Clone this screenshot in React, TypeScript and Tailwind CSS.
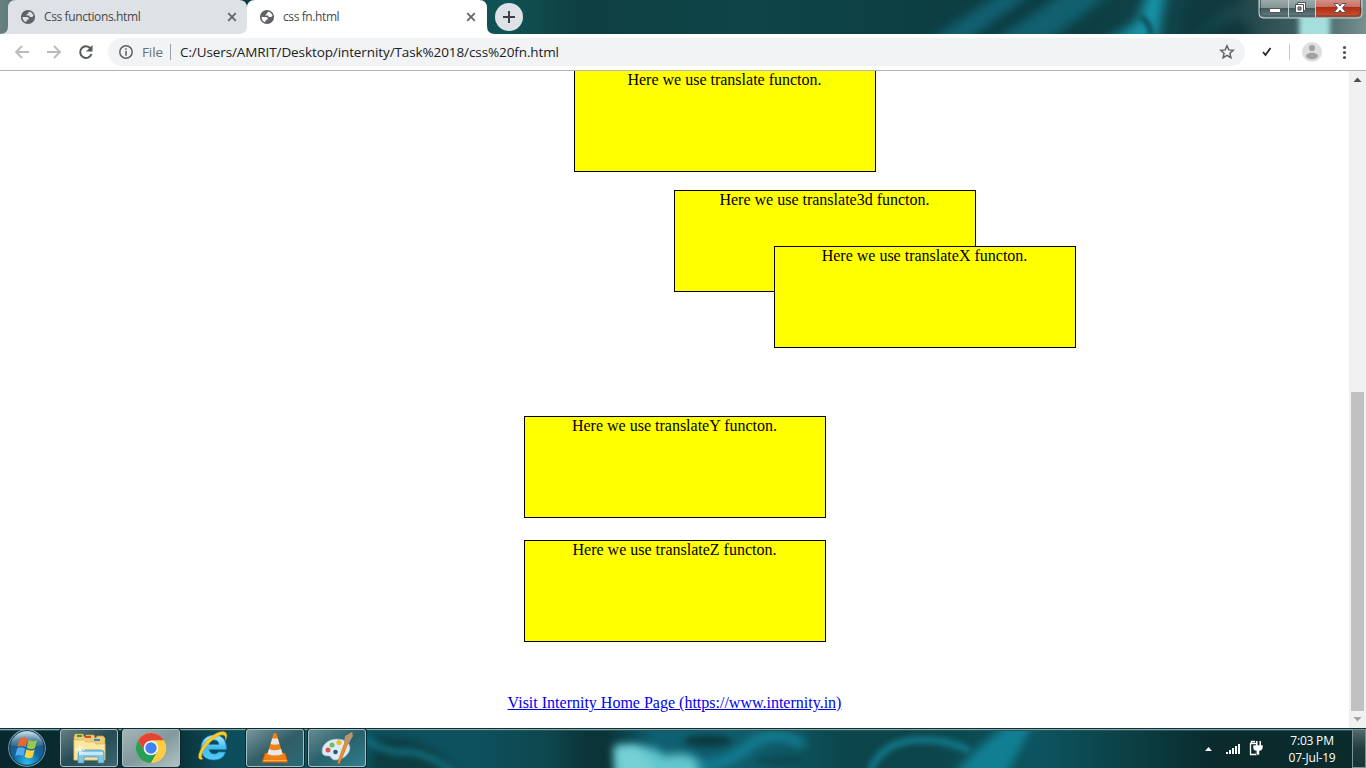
import React from "react";

const UI = "font-['Open_Sans','Noto_Sans',sans-serif]";

function Globe({ land }: { land: string }) {
  return (
    <svg viewBox="0 0 16 16" className="h-4 w-4 shrink-0">
      <circle cx="8" cy="8" r="7.100" fill="#5f6368" />
      <path d="M2.500 8h4.200c1.500 0 2.300.9 2.300 2.200H7.700c0 1.200-.8 1.500-1.500 1.500v1.600C4 12.500 2.500 10.400 2.500 8zM9.600 2.700c2 .6 3.400 2.100 3.900 4-.5.900-1.300 1.300-2.300 1.300-1.400 0-2-.7-2-1.600H6.600c0-1.300.7-1.700 1.500-1.700 0-1.200.5-1.700 1.500-2z" fill={land} />
    </svg>
  );
}

function Cross() {
  return (
    <svg viewBox="0 0 10 10" className="h-[10px] w-[10px] shrink-0">
      <path d="M1.200 1.200l7.600 7.600M8.800 1.200L1.200 8.800" stroke="#5f6368" strokeWidth="1.700" />
    </svg>
  );
}

function TitleBackdrop() {
  return (
    <svg className="absolute inset-0 h-full w-full" viewBox="0 0 1366 34" preserveAspectRatio="none">
      <defs>
        <linearGradient id="title">
          <stop offset="0" stopColor="#688180" />
          <stop offset=".03" stopColor="#385d5e" />
          <stop offset=".15" stopColor="#073b40" />
          <stop offset=".37" stopColor="#105354" />
          <stop offset=".42" stopColor="#0f4043" />
          <stop offset=".55" stopColor="#0d4548" />
          <stop offset=".76" stopColor="#0c3b40" />
          <stop offset=".88" stopColor="#11454b" />
          <stop offset=".92" stopColor="#284b4e" />
          <stop offset=".97" stopColor="#4d6c6d" />
          <stop offset="1" stopColor="#789090" />
        </linearGradient>
        <filter id="soft" filterUnits="userSpaceOnUse" x="-50" y="-60" width="1470" height="160" colorInterpolationFilters="sRGB"><feGaussianBlur stdDeviation="6" /></filter>
        <filter id="soft2" filterUnits="userSpaceOnUse" x="-50" y="-60" width="1470" height="160" colorInterpolationFilters="sRGB"><feGaussianBlur stdDeviation="2.500" /></filter>
      </defs>
      <rect width="1366" height="34" fill="url(#title)" />
      <path d="M925 44L1005-10h32L962 44z" fill="#136174" filter="url(#soft)" />
      <path d="M988 44l80-54h46L1045 44z" fill="#116171" filter="url(#soft)" />
      <path d="M1100 44q34-16 40-28l9-28h17l-9 56z" fill="#1895a8" filter="url(#soft)" />
      <path d="M1140 17q10 4 11 19" stroke="#0a4350" strokeWidth="5" fill="none" filter="url(#soft2)" />
      <path d="M1190-12h60q-10 16-28 22-16 8-36 34-6-16 4-56" fill="#0f393e" filter="url(#soft)" />
      <path d="M1190 40h65l-15-22z" fill="#0f3539" filter="url(#soft)" />
      <rect x="1299" y="13" width="31" height="30" fill="#a4dedd" filter="url(#soft2)" />
    </svg>
  );
}

function WindowButtons() {
  return (
    <svg className="absolute right-[2px] top-0 h-[19px] w-[106px]" viewBox="0 0 106 19">
      <defs>
        <linearGradient id="glassbtn" x2="0" y2="1">
          <stop offset="0" stopColor="#a2b0b0" /><stop offset=".48" stopColor="#849596" />
          <stop offset=".5" stopColor="#40575a" /><stop offset="1" stopColor="#6d8587" />
        </linearGradient>
        <linearGradient id="redbtn" x2="0" y2="1">
          <stop offset="0" stopColor="#d79a8e" /><stop offset=".48" stopColor="#c57060" />
          <stop offset=".5" stopColor="#af2e17" /><stop offset="1" stopColor="#ce5335" />
        </linearGradient>
      </defs>
      <path d="M1-2h103v16q0 4-4 4H5q-4 0-4-4z" fill="url(#glassbtn)" />
      <path d="M57-2h46v15q0 4-4 4H57z" fill="url(#redbtn)" />
      <path d="M1-2v16q0 4 4 4h95q4 0 4-4V-2" fill="none" stroke="#c7d6d6" />
      <path d="M2.500-2v14q0 4 4 4h92q4 0 4-4V-2" fill="none" stroke="#243b40" strokeOpacity=".6" />
      <path d="M30.500 0v17M57.500 0v17" stroke="#c4d1d1" />
      <rect x="11.500" y="8.500" width="11" height="4" rx=".5" fill="#fff" stroke="#54545e" />
      <path d="M39.500 2.500h8v8h-8z" fill="#fff" stroke="#50505a" />
      <path d="M37.500 4.500h8v8h-8z" fill="#fff" stroke="#50505a" />
      <path d="M40 7h3v3h-3z" fill="#7c8e93" stroke="#50505a" />
      <path d="M76 3.500h4l2 2.500 2-2.500h4l-3.500 4.500 3.500 4.500h-4l-2-2.500-2 2.500h-4l3.500-4.500z" fill="#fff" stroke="#58505a" />
    </svg>
  );
}

function Toolbar() {
  return (
    <div className="flex h-[37px] shrink-0 items-center border-b border-[#b4b2b4] bg-white">
      <svg className="h-9 w-[108px] shrink-0" viewBox="0 0 108 36" fill="none">
        <path d="M29 18H16.500M22 12l-6 6 6 6M47 18h12.500M54 12l6 6-6 6" stroke="#bbb" strokeWidth="1.800" />
        <path d="M90.500 14.500A5.800 5.800 0 1 0 91.500 20" stroke="#55595e" strokeWidth="2" />
        <path d="M92.500 11v6.500H86z" fill="#55595e" />
      </svg>
      <div className="flex h-7 w-[1137px] shrink-0 items-center rounded-full bg-[#f1f3f4] pl-[11px] pr-[10px]">
        <svg className="h-[14px] w-[14px]" viewBox="0 0 14 14">
          <circle cx="7" cy="7" r="6.200" fill="none" stroke="#5f6368" strokeWidth="1.500" />
          <path d="M6.200 3.200h1.600v1.500H6.200zM6.200 6h1.600v4.800H6.200z" fill="#5f6368" />
        </svg>
        <span className={`${UI} ml-[9px] w-[28px] whitespace-nowrap pt-px text-[13.500px] tracking-[-0.100px] text-[#6b6f74]`}>File</span>
        <span className="h-4 w-px bg-[#9aa0a6]" />
        <span className={`${UI} ml-[9px] flex-1 whitespace-nowrap text-[13.500px] tracking-[-0.100px] text-[#202124]`}>C:/Users/AMRIT/Desktop/internity/Task%2018/css%20fn.html</span>
        <svg className="h-4 w-4" viewBox="0 0 16 16"><path d="M8 1.800l1.800 4.100 4.500.4-3.400 3 1 4.400L8 11.400l-3.900 2.300 1-4.400-3.400-3 4.500-.4z" fill="none" stroke="#5f6368" strokeWidth="1.500" /></svg>
      </div>
      <svg className="h-9 w-[121px]" viewBox="0 0 121 36">
        <path d="M18 18l2.500 3L25.500 14" stroke="#25272a" strokeWidth="1.800" fill="none" />
        <path d="M44.500 10v16" stroke="#c8cacc" />
        <circle cx="67" cy="18" r="10" fill="#dedede" /><circle cx="67" cy="14" r="3.100" fill="#a1a1a1" />
        <ellipse cx="67" cy="22" rx="6" ry="3.300" fill="#a1a1a1" />
        <g fill="#4f5358"><circle cx="99.500" cy="13.500" r="1.600" /><circle cx="99.500" cy="18.500" r="1.600" /><circle cx="99.500" cy="23.500" r="1.600" /></g>
      </svg>
    </div>
  );
}

function Box({ label, place }: { label: string; place: string }) {
  return (
    <div className={`h-[102px] w-[302px] shrink-0 border border-black bg-[#ffff00] pr-px text-center text-[16px] leading-[18px] text-black ${place}`}>
      {label}
    </div>
  );
}

function TaskBackdrop() {
  return (
    <svg className="absolute inset-0 h-full w-full" viewBox="0 0 1366 40" preserveAspectRatio="none">
      <defs>
        <linearGradient id="task">
          <stop offset="0" stopColor="#08282d" /><stop offset=".13" stopColor="#0a3036" />
          <stop offset=".16" stopColor="#0d4d5b" /><stop offset=".25" stopColor="#0c5361" />
          <stop offset=".35" stopColor="#0d505e" /><stop offset=".4" stopColor="#0e474f" />
          <stop offset=".43" stopColor="#0b3438" /><stop offset=".445" stopColor="#0b3438" /><stop offset=".48" stopColor="#0e6072" />
          <stop offset=".56" stopColor="#0f5b69" /><stop offset=".62" stopColor="#0c454a" />
          <stop offset=".68" stopColor="#0c454a" />
          <stop offset=".76" stopColor="#0d5460" /><stop offset=".83" stopColor="#0b3f43" />
          <stop offset=".89" stopColor="#0a2a2c" /><stop offset="1" stopColor="#0b2a2c" />
        </linearGradient>
        <filter id="haze" filterUnits="userSpaceOnUse" x="-50" y="-60" width="1470" height="160" colorInterpolationFilters="sRGB"><feGaussianBlur stdDeviation="5" /></filter>
        <filter id="haze2" filterUnits="userSpaceOnUse" x="-50" y="-60" width="1470" height="160" colorInterpolationFilters="sRGB"><feGaussianBlur stdDeviation="3" /></filter>
      </defs>
      <rect width="1366" height="40" fill="url(#task)" />
      <path d="M375 11q50-8 85 37h-90z" fill="#0d3d41" filter="url(#haze)" />
      <path d="M364 10q15 12 35 14 27-3 60 25" fill="none" stroke="#117081" strokeWidth="6" filter="url(#haze2)" />
      <path d="M614 18q36-4 51 10 28-8 39 12v14h-88z" fill="#62c7cf" filter="url(#haze)" />
      <path d="M617 20h20l18 22v10h-35z" fill="#77d0d5" filter="url(#haze)" />
      <ellipse cx="708" cy="13" rx="24" ry="6" fill="#0b3a41" filter="url(#haze2)" />
      <path d="M698 40q35-5 57-27 24-12 49 4" fill="none" stroke="#148399" strokeWidth="9" filter="url(#haze)" />
      <ellipse cx="780" cy="33" rx="25" ry="4" fill="#0b4750" filter="url(#haze2)" />
      <path d="M870 44q14-39 70-31 20 4 30 10" fill="none" stroke="#138094" strokeWidth="6" filter="url(#haze2)" />
      <path d="M952 48l24-26q20-17 34-28h24l-28 54z" fill="#117f92" filter="url(#haze)" />
      <path d="M0 .5h1366" stroke="#102e34" /><path d="M0 1.500h1366" stroke="#82a8ab" />
      <path d="M0 2.500h1366" stroke="#23555b" />
    </svg>
  );
}

function TaskButton({ children, tone }: { children: React.ReactNode; tone: string }) {
  return (
    <div className={`flex h-[38px] w-[58px] shrink-0 items-center justify-center rounded-[3px] border border-[#a8bdc0] bg-linear-to-br shadow-[0_0_0_1px_#092a30] ${tone}`}>
      {children}
    </div>
  );
}

function StartOrb() {
  return (
    <svg className="-mt-[3px] ml-[7px] h-[40px] w-[40px] shrink-0" viewBox="0 0 40 40">
      <defs>
        <radialGradient id="orb" cx=".5" cy=".9" r=".85"><stop offset="0" stopColor="#27bdec" /><stop offset=".45" stopColor="#1266a1" /><stop offset=".8" stopColor="#255377" /><stop offset="1" stopColor="#8ab7cb" /></radialGradient>
        <linearGradient id="orbshine" x2="0" y2="1"><stop offset="0" stopColor="#d3e6ef" stopOpacity=".85" /><stop offset="1" stopColor="#65a0bf" stopOpacity=".25" /></linearGradient>
      </defs>
      <circle cx="20" cy="21" r="18.300" fill="url(#orb)" stroke="#7fa9b9" />
      <circle cx="20" cy="21" r="17.300" fill="none" stroke="#123951" />
      <path d="M3.500 18a16.800 16.800 0 0 1 33 0q-14 4-33 0z" fill="url(#orbshine)" />
      <g transform="translate(1 0)">
        <path d="M11.500 12q4-2.800 8 .1l-2 8q-4-2.500-8 0z" fill="#ed672c" />
        <path d="M20.800 12.800q4 2.800 8.200.2l-2 8q-4.200 2.500-8.200-.2z" fill="#99c949" />
        <path d="M9.100 21.500q4-2.500 8.100.2l-2 7.500q-4-2.500-8-.1z" fill="#56aaf1" />
        <path d="M18.500 22.200q4 2.700 8.200.2l-2 7.600q-4.200 2.500-8.200-.2z" fill="#ffd23e" />
      </g>
    </svg>
  );
}

function Explorer() {
  return (
    <svg className="h-[34px] w-[34px]" viewBox="0 0 34 34">
      <path d="M2 6l1-3h8l1 3h1l1-2h8l1 3h1l1-2h6l2 2v22H2z" fill="#eccd75" stroke="#c69a3b" strokeWidth=".7" />
      <path d="M2 9h10l2 2h8l2 2h9v16H2z" fill="#fbe7a0" stroke="#d9b75c" strokeWidth=".7" />
      <path d="M5 4h5v2H5z" fill="#26a638" /><path d="M13 5h6v2h-6z" fill="#d84a2a" /><path d="M22 8h6v2h-6z" fill="#3487d4" />
      <path d="M6 32V22q0-3 3-3h20q3 0 3 3v10h-6v-6H12v6z" fill="#83c5e6" stroke="#4e91b8" strokeWidth=".7" />
      <path d="M7 21h24v3H7z" fill="#c3e8f7" /><path d="M8 14v10M3 19h10M5 16l6 6M11 16l-6 6" stroke="#fff" strokeWidth=".8" />
    </svg>
  );
}

function Chrome() {
  return (
    <svg className="h-8 w-8" viewBox="0 0 32 32">
      <circle cx="16" cy="16" r="15" fill="#fbcd43" />
      <path d="M3 8.500A15 15 0 0 1 29 8.500H16L9.500 19.800z" fill="#e34436" />
      <path d="M3 8.500A15 15 0 0 0 16 31l6.500-11.300H9.500z" fill="#279e58" />
      <path d="M16 8.500h13A15 15 0 0 1 16 31l6.500-11.300z" fill="#fbcd43" />
      <circle cx="16" cy="16" r="7.300" fill="#f5f7f7" /><circle cx="16" cy="16" r="5.700" fill="#4282f0" />
    </svg>
  );
}

function InternetExplorer() {
  return (
    <svg className="-mt-1 ml-[16px] mr-[12px] h-[36px] w-[34px] shrink-0" viewBox="0 0 34 34">
      <defs><linearGradient id="ie" x2="0" y2="1"><stop offset="0" stopColor="#b9efff" /><stop offset=".5" stopColor="#43bced" /><stop offset="1" stopColor="#54cbf8" /></linearGradient></defs>
      <path d="M30.500 20.500H13q1 4.500 5.500 4.500 3 0 4-2h7q-2.500 8-11.500 8C9 31 5 26 5 19 5 11 11 6 18 6c9 0 12.500 6 12.500 14.500zM13 15.500h10q-.5-4.500-5-4.500t-5 4.500z" fill="url(#ie)" stroke="#1784bf" strokeWidth=".7" />
      <path d="M7 30c-5 2-6-3-2-10C10 10 23 0 29 3c3 2 2 6 0 9 1-4 0-6-3-6C20 6 8 18 6 25q-1 4 1 5z" fill="#f8ca28" stroke="#d18d15" strokeWidth=".4" />
    </svg>
  );
}

function Cone() {
  return (
    <svg className="h-8 w-8" viewBox="0 0 32 32">
      <path d="M6 21h20l3 9.500H3z" fill="#ef7d12" stroke="#bd4d05" strokeWidth=".7" />
      <path d="M14.500 1.500q1.500-1 3 0l7 23.500q-8 4-17 0z" fill="#ef8219" />
      <path d="M13.200 6.500h5.600l1.600 5.500q-4.400 1.600-8.800 0zM10 17q6 2.500 12 0l1.700 5q-7.700 3-15.400 0z" fill="#e7e9e8" />
      <path d="M4.500 28.500h23" stroke="#ffb457" />
    </svg>
  );
}

function Palette() {
  return (
    <svg className="h-[34px] w-[34px]" viewBox="0 0 34 34">
      <path d="M17 8C8 8 2 14 2 20c0 5 4 5 7 5 2 0 2 3 5 4 8 1 16-6 16-12 0-5-5-9-13-9z" fill="#dcebf6" stroke="#8caec2" strokeWidth=".7" />
      <circle cx="8" cy="19" r="2.500" fill="#dc564e" /><circle cx="12" cy="14" r="2.500" fill="#6abf4f" /><circle cx="19" cy="11.500" r="2.600" fill="#eebb34" /><circle cx="15.500" cy="21" r="2.300" fill="#285c75" />
      <path d="M25 11l3 1-8.500 21-2-1z" fill="#f5902b" stroke="#b55f16" strokeWidth=".6" />
      <path d="M24 11l1-6 7-4 1 4-3 5-1 3z" fill="#b89670" />
    </svg>
  );
}

function Taskbar() {
  return (
    <footer className="relative h-10 shrink-0 overflow-hidden">
      <TaskBackdrop />
      <div className="relative flex h-full items-center">
        <StartOrb />
        <div className="ml-[13px] flex items-center gap-1">
          <TaskButton tone="from-[#637e84] via-[#264c54] to-[#3b6870]"><Explorer /></TaskButton>
          <TaskButton tone="from-[#a6b5b7] via-[#81999d] to-[#b3c2c4]"><Chrome /></TaskButton>
        </div>
        <InternetExplorer />
        <div className="ml-[4px] flex items-center gap-1">
          <TaskButton tone="from-[#77969b] via-[#315d66] to-[#286b77]"><Cone /></TaskButton>
          <TaskButton tone="from-[#648a91] via-[#29616b] to-[#2f8090]"><Palette /></TaskButton>
        </div>
        <div className="flex-1" />
        <svg className="h-10 w-[70px]" viewBox="0 0 70 40">
          <path d="M6 23l3.500-4 3.500 4z" fill="#edf4f4" />
          <g fill="#f5fafa"><path d="M27 24h2v2h-2zM30 22h2v4h-2zM33 20h2v6h-2zM36 18h2v8h-2zM39 16h2v10h-2z" /></g>
          <path d="M51.500 15.500h6v11h-6zM52.500 15v-1.500h3.500" stroke="white" strokeWidth="1.300" fill="none" />
          <path d="M54 17h10v3q-1 3-3 3h-.5v4h-3v-4q-3.500 0-3.500-3z" fill="white" stroke="#0b2a2c" strokeWidth=".6" />
          <path d="M57 13h1.500v5H57zM60.500 13H62v5h-1.500z" fill="white" />
        </svg>
        <div className={`${UI} mr-[2px] ml-[5px] w-[76px] pt-[2px] text-center text-[12px] leading-[17px] tracking-[-0.200px] text-white`}>
          <div className="whitespace-nowrap">7:03 PM</div><div className="whitespace-nowrap">07-Jul-19</div>
        </div>
        <div className="h-[39px] w-[14px] border border-[#7a9395] bg-linear-to-b from-[#526b6d] via-[#203d40] to-[#193537]" />
      </div>
    </footer>
  );
}

export default function App() {
  return (
    <div className="flex h-[768px] w-[1366px] flex-col overflow-hidden bg-white">
      <header className="relative h-[34px] shrink-0 overflow-hidden">
        <TitleBackdrop />
        <svg className="absolute bottom-0 left-0 h-[34px] w-[500px]" viewBox="0 0 500 34">
          <path d="M0 34q8 0 8-8V8q0-8 8-8h223q8 0 8 8v26z" fill="#dee1e6" />
          <path d="M239 34q8 0 8-8V8q0-8 8-8h224q8 0 8 8v18q0 8 8 8z" fill="#fff" />
        </svg>
        <div className={`${UI} relative flex h-full items-center text-[12px] text-[#46494d]`}>
          <div className="flex w-[247px] items-center pl-5 pr-[10px]">
            <Globe land="#dfe2e7" /><span className="ml-2 flex-1 whitespace-nowrap tracking-[-0.380px]">Css functions.html</span><Cross />
          </div>
          <div className="flex w-[240px] items-center pl-3 pr-[11px]">
            <Globe land="#ffffff" /><span className="ml-2 flex-1 whitespace-nowrap tracking-[-0.400px]">css fn.html</span><Cross />
          </div>
          <svg className="ml-2 h-7 w-7" viewBox="0 0 28 28"><circle cx="14" cy="14" r="14" fill="#dee1e6" /><path d="M14 8v12M8 14h12" stroke="#3c4043" strokeWidth="2" /></svg>
        </div>
        <WindowButtons />
      </header>
      <Toolbar />
      <div className="flex h-[657px] shrink-0">
        <main className="flex w-[1349px] flex-col overflow-hidden bg-white font-['Liberation_Serif',serif]">
          <Box label="Here we use translate functon." place="ml-[574px] -mt-px" />
          <Box label="Here we use translate3d functon." place="ml-[674px] mt-[18px]" />
          <Box label="Here we use translateX functon." place="ml-[774px] -mt-[46px] relative" />
          <Box label="Here we use translateY functon." place="ml-[524px] mt-[68px]" />
          <Box label="Here we use translateZ functon." place="ml-[524px] mt-[22px]" />
          <a className="mt-[52px] text-center text-[16px] leading-[18px] text-[#0000ee] underline">Visit Internity Home Page (https://www.internity.in)</a>
        </main>
        <aside className="flex w-[17px] flex-col items-center bg-[#f1f1f1]">
          <svg className="h-[17px] w-[17px]" viewBox="0 0 17 17"><path d="M4.500 11l4-4.500 4 4.500z" fill="#505050" /></svg>
          <div className="mt-[304px] h-[319px] w-[13px] bg-[#c1c1c1]" />
          <svg className="h-[17px] w-[17px]" viewBox="0 0 17 17"><path d="M4.500 6l4 4.500 4-4.500z" fill="#a3a3a3" /></svg>
        </aside>
      </div>
      <Taskbar />
    </div>
  );
}
